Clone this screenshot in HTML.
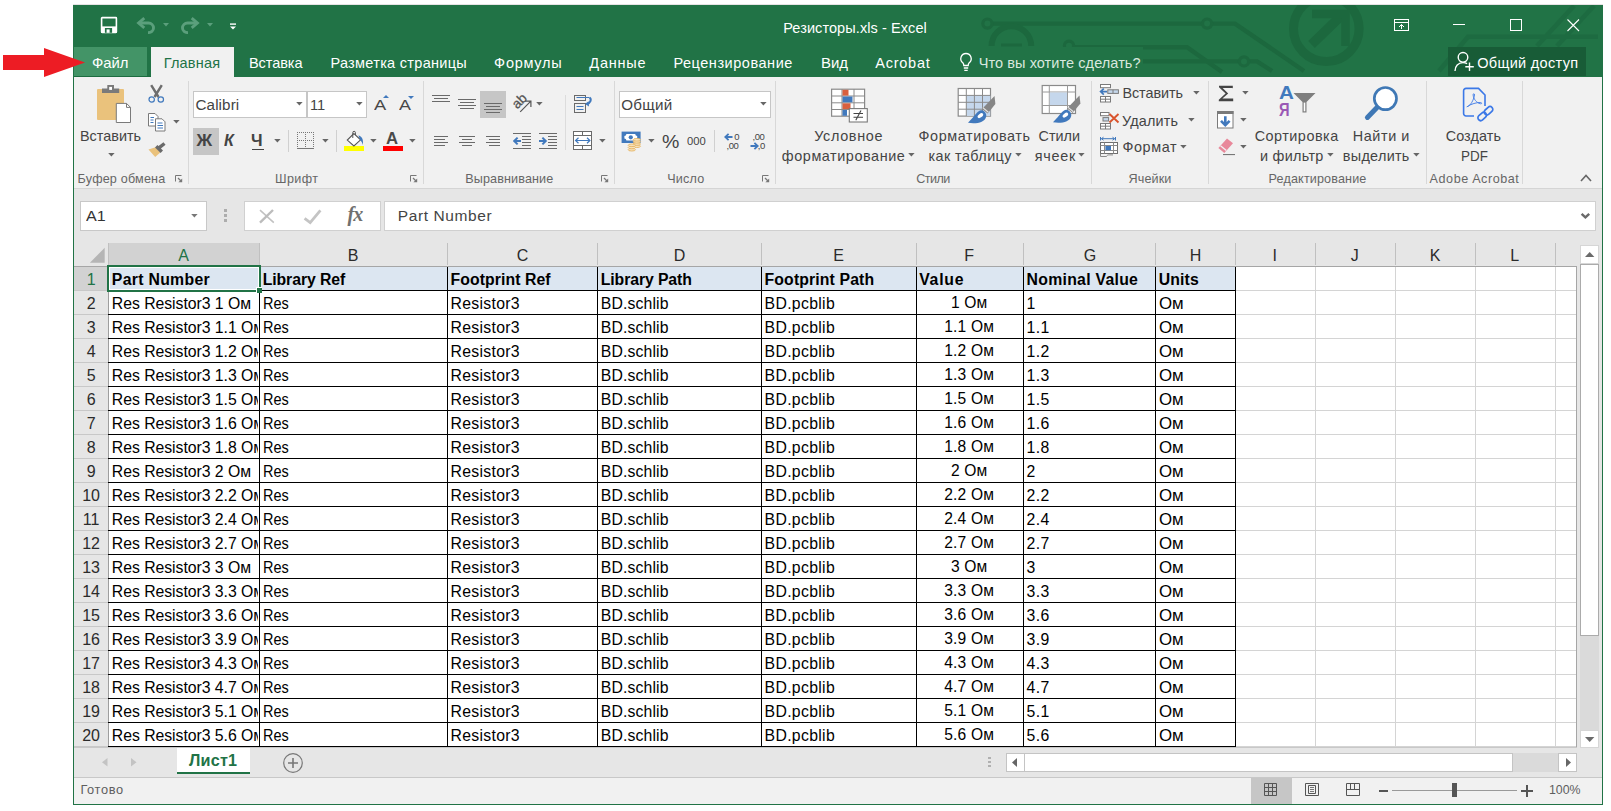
<!DOCTYPE html>
<html><head><meta charset="utf-8"><title>Excel</title>
<style>
html,body{margin:0;padding:0;background:#fff;}
body{width:1611px;height:811px;position:relative;overflow:hidden;font-family:"Liberation Sans",sans-serif;}
#app div,#app svg,#app span{position:absolute;display:block;}
#app span{white-space:nowrap;line-height:1;}
#app{position:absolute;left:0;top:0;width:1611px;height:811px;overflow:hidden;}
</style></head><body><div id="app">
<div style="left:73px;top:5px;width:1530px;height:800px;background:#f1f1f1;"></div>
<div style="left:73px;top:4px;width:1530px;height:1px;background:#e6e3e4;"></div>
<div style="left:73px;top:5px;width:1530px;height:72px;background:#217346;"></div>
<div style="left:74px;top:47px;width:73px;height:29px;background:#439467;"></div>
<div style="left:74px;top:76px;width:77px;height:1px;background:#1c6c40;"></div>
<div style="left:151px;top:47px;width:83px;height:30px;background:#f1f1f1;"></div>
<div style="left:1448px;top:47px;width:138px;height:29px;background:#185c37;"></div>
<div style="left:74px;top:77px;width:1528px;height:111px;background:#f1f1f1;"></div>
<div style="left:74px;top:188px;width:1528px;height:1px;background:#d5d5d5;"></div>
<div style="left:74px;top:189px;width:1528px;height:590px;background:#e6e6e6;"></div>
<div style="left:74px;top:777px;width:1528px;height:1px;background:#c8c8c8;"></div>
<div style="left:74px;top:778px;width:1528px;height:26px;background:#f1f1f1;"></div>
<div style="left:188px;top:81px;width:1px;height:103px;background:#d8d8d8;"></div>
<div style="left:423px;top:81px;width:1px;height:103px;background:#d8d8d8;"></div>
<div style="left:614px;top:81px;width:1px;height:103px;background:#d8d8d8;"></div>
<div style="left:775px;top:81px;width:1px;height:103px;background:#d8d8d8;"></div>
<div style="left:1091px;top:81px;width:1px;height:103px;background:#d8d8d8;"></div>
<div style="left:1208px;top:81px;width:1px;height:103px;background:#d8d8d8;"></div>
<div style="left:1426px;top:81px;width:1px;height:103px;background:#d8d8d8;"></div>
<div style="left:1522px;top:81px;width:1px;height:103px;background:#d8d8d8;"></div>
<div style="left:288px;top:130px;width:1px;height:22px;background:#d0d0d0;"></div>
<div style="left:336px;top:130px;width:1px;height:22px;background:#d0d0d0;"></div>
<div style="left:714px;top:130px;width:1px;height:22px;background:#d0d0d0;"></div>
<div style="left:565px;top:95px;width:1px;height:55px;background:#dcdcdc;"></div>
<div style="left:193px;top:91px;width:112px;height:25px;background:#fff;border:1px solid #c6c6c6;"></div>
<div style="left:307px;top:91px;width:58px;height:25px;background:#fff;border:1px solid #c6c6c6;"></div>
<div style="left:619px;top:91px;width:150px;height:25px;background:#fff;border:1px solid #c6c6c6;"></div>
<div style="left:193px;top:128px;width:26px;height:27px;background:#c6c6c6;"></div>
<div style="left:480px;top:91px;width:26px;height:27px;background:#c6c6c6;"></div>
<div style="left:252px;top:148.5px;width:12px;height:1px;background:#444;"></div>
<svg style="left:107.5px;top:153px" width="7" height="4" viewBox="0 0 7 4"><polygon points="0.2,0 6.6,0 3.4,3.5" fill="#666"/></svg>
<svg style="left:172.5px;top:120px" width="7" height="4" viewBox="0 0 7 4"><polygon points="0.2,0 6.6,0 3.4,3.5" fill="#666"/></svg>
<svg style="left:274px;top:139px" width="7" height="4" viewBox="0 0 7 4"><polygon points="0.2,0 6.6,0 3.4,3.5" fill="#666"/></svg>
<svg style="left:322px;top:139px" width="7" height="4" viewBox="0 0 7 4"><polygon points="0.2,0 6.6,0 3.4,3.5" fill="#666"/></svg>
<svg style="left:370px;top:139px" width="7" height="4" viewBox="0 0 7 4"><polygon points="0.2,0 6.6,0 3.4,3.5" fill="#666"/></svg>
<svg style="left:408.5px;top:139px" width="7" height="4" viewBox="0 0 7 4"><polygon points="0.2,0 6.6,0 3.4,3.5" fill="#666"/></svg>
<svg style="left:296px;top:102px" width="7" height="4" viewBox="0 0 7 4"><polygon points="0.2,0 6.6,0 3.4,3.5" fill="#666"/></svg>
<svg style="left:356px;top:102px" width="7" height="4" viewBox="0 0 7 4"><polygon points="0.2,0 6.6,0 3.4,3.5" fill="#666"/></svg>
<svg style="left:536px;top:102px" width="7" height="4" viewBox="0 0 7 4"><polygon points="0.2,0 6.6,0 3.4,3.5" fill="#666"/></svg>
<svg style="left:599px;top:138.7px" width="7" height="4" viewBox="0 0 7 4"><polygon points="0.2,0 6.6,0 3.4,3.5" fill="#666"/></svg>
<svg style="left:648px;top:138.7px" width="7" height="4" viewBox="0 0 7 4"><polygon points="0.2,0 6.6,0 3.4,3.5" fill="#666"/></svg>
<svg style="left:760px;top:102px" width="7" height="4" viewBox="0 0 7 4"><polygon points="0.2,0 6.6,0 3.4,3.5" fill="#666"/></svg>
<svg style="left:908px;top:153px" width="7" height="4" viewBox="0 0 7 4"><polygon points="0.2,0 6.6,0 3.4,3.5" fill="#666"/></svg>
<svg style="left:1015px;top:153px" width="7" height="4" viewBox="0 0 7 4"><polygon points="0.2,0 6.6,0 3.4,3.5" fill="#666"/></svg>
<svg style="left:1078px;top:153px" width="7" height="4" viewBox="0 0 7 4"><polygon points="0.2,0 6.6,0 3.4,3.5" fill="#666"/></svg>
<svg style="left:1193px;top:91px" width="7" height="4" viewBox="0 0 7 4"><polygon points="0.2,0 6.6,0 3.4,3.5" fill="#666"/></svg>
<svg style="left:1188px;top:118px" width="7" height="4" viewBox="0 0 7 4"><polygon points="0.2,0 6.6,0 3.4,3.5" fill="#666"/></svg>
<svg style="left:1180px;top:145px" width="7" height="4" viewBox="0 0 7 4"><polygon points="0.2,0 6.6,0 3.4,3.5" fill="#666"/></svg>
<svg style="left:1242px;top:91px" width="7" height="4" viewBox="0 0 7 4"><polygon points="0.2,0 6.6,0 3.4,3.5" fill="#666"/></svg>
<svg style="left:1240px;top:118px" width="7" height="4" viewBox="0 0 7 4"><polygon points="0.2,0 6.6,0 3.4,3.5" fill="#666"/></svg>
<svg style="left:1240px;top:145px" width="7" height="4" viewBox="0 0 7 4"><polygon points="0.2,0 6.6,0 3.4,3.5" fill="#666"/></svg>
<svg style="left:1327px;top:153px" width="7" height="4" viewBox="0 0 7 4"><polygon points="0.2,0 6.6,0 3.4,3.5" fill="#666"/></svg>
<svg style="left:1413px;top:153px" width="7" height="4" viewBox="0 0 7 4"><polygon points="0.2,0 6.6,0 3.4,3.5" fill="#666"/></svg>
<svg style="left:175px;top:175px" width="8" height="8" viewBox="0 0 8 8"><path d="M0.5 6.5V0.5H6.5" stroke="#777" fill="none" stroke-width="1"/><polygon points="7.2,3.4 7.2,7.2 3.4,7.2" fill="#777"/><path d="M3 3L6 6" stroke="#777" stroke-width="1.2"/></svg>
<svg style="left:410px;top:175px" width="8" height="8" viewBox="0 0 8 8"><path d="M0.5 6.5V0.5H6.5" stroke="#777" fill="none" stroke-width="1"/><polygon points="7.2,3.4 7.2,7.2 3.4,7.2" fill="#777"/><path d="M3 3L6 6" stroke="#777" stroke-width="1.2"/></svg>
<svg style="left:601px;top:175px" width="8" height="8" viewBox="0 0 8 8"><path d="M0.5 6.5V0.5H6.5" stroke="#777" fill="none" stroke-width="1"/><polygon points="7.2,3.4 7.2,7.2 3.4,7.2" fill="#777"/><path d="M3 3L6 6" stroke="#777" stroke-width="1.2"/></svg>
<svg style="left:762px;top:175px" width="8" height="8" viewBox="0 0 8 8"><path d="M0.5 6.5V0.5H6.5" stroke="#777" fill="none" stroke-width="1"/><polygon points="7.2,3.4 7.2,7.2 3.4,7.2" fill="#777"/><path d="M3 3L6 6" stroke="#777" stroke-width="1.2"/></svg>
<svg style="left:1580px;top:174px" width="12" height="8" viewBox="0 0 12 8"><path d="M1 7L6 1.5L11 7" stroke="#666" stroke-width="1.6" fill="none"/></svg>
<div style="left:80px;top:201px;width:125px;height:28px;background:#fff;border:1px solid #c8c8c8;"></div>
<div style="left:244px;top:201px;width:135px;height:28px;background:#fff;border:1px solid #d0d0d0;"></div>
<div style="left:384px;top:201px;width:1210px;height:28px;background:#fff;border:1px solid #d0d0d0;"></div>
<svg style="left:191px;top:214px" width="7" height="4" viewBox="0 0 7 4"><polygon points="0.2,0 6.6,0 3.4,3.5" fill="#777"/></svg>
<div style="left:224px;top:209.3px;width:3px;height:2.5px;background:#adadad;"></div>
<div style="left:224px;top:214.3px;width:3px;height:2.5px;background:#adadad;"></div>
<div style="left:224px;top:219.2px;width:3px;height:2.5px;background:#adadad;"></div>
<svg style="left:258px;top:208px" width="18" height="17" viewBox="0 0 18 17"><path d="M2 2.2L15.8 14.6" stroke="#c2c2c2" stroke-width="1.6" fill="none"/><path d="M15 2L2 14.6" stroke="#bcbcbc" stroke-width="2.4" fill="none"/></svg>
<svg style="left:303px;top:208px" width="20" height="18" viewBox="0 0 20 18"><path d="M1.6 10.4L7.2 14.6L17.4 2.4" stroke="#c4c4c4" stroke-width="2.8" fill="none"/></svg>
<svg style="left:1580px;top:212px" width="11" height="8" viewBox="0 0 11 8"><path d="M1.6 1.8L5.4 5.4L9.2 1.8" stroke="#6a6a6a" stroke-width="2.4" fill="none"/></svg>
<div style="left:108px;top:266px;width:1469px;height:481px;background:#fff;"></div>
<div style="left:109px;top:243px;width:150px;height:22px;background:#d2d2d2;"></div>
<div style="left:74px;top:267px;width:34px;height:23px;background:#d2d2d2;"></div>
<svg style="left:89px;top:247px" width="16" height="16" viewBox="0 0 16 16"><polygon points="15.7,0.8 15.7,15.7 0.9,15.7" fill="#b5b5b5"/></svg>
<div style="left:1235px;top:266px;width:1px;height:481px;background:#d4d4d4;"></div>
<div style="left:1315px;top:266px;width:1px;height:481px;background:#d4d4d4;"></div>
<div style="left:1395px;top:266px;width:1px;height:481px;background:#d4d4d4;"></div>
<div style="left:1475px;top:266px;width:1px;height:481px;background:#d4d4d4;"></div>
<div style="left:1555px;top:266px;width:1px;height:481px;background:#d4d4d4;"></div>
<div style="left:1236px;top:266px;width:341px;height:1px;background:#d4d4d4;"></div>
<div style="left:1236px;top:290px;width:341px;height:1px;background:#d4d4d4;"></div>
<div style="left:1236px;top:314px;width:341px;height:1px;background:#d4d4d4;"></div>
<div style="left:1236px;top:338px;width:341px;height:1px;background:#d4d4d4;"></div>
<div style="left:1236px;top:362px;width:341px;height:1px;background:#d4d4d4;"></div>
<div style="left:1236px;top:386px;width:341px;height:1px;background:#d4d4d4;"></div>
<div style="left:1236px;top:410px;width:341px;height:1px;background:#d4d4d4;"></div>
<div style="left:1236px;top:434px;width:341px;height:1px;background:#d4d4d4;"></div>
<div style="left:1236px;top:458px;width:341px;height:1px;background:#d4d4d4;"></div>
<div style="left:1236px;top:482px;width:341px;height:1px;background:#d4d4d4;"></div>
<div style="left:1236px;top:506px;width:341px;height:1px;background:#d4d4d4;"></div>
<div style="left:1236px;top:530px;width:341px;height:1px;background:#d4d4d4;"></div>
<div style="left:1236px;top:554px;width:341px;height:1px;background:#d4d4d4;"></div>
<div style="left:1236px;top:578px;width:341px;height:1px;background:#d4d4d4;"></div>
<div style="left:1236px;top:602px;width:341px;height:1px;background:#d4d4d4;"></div>
<div style="left:1236px;top:626px;width:341px;height:1px;background:#d4d4d4;"></div>
<div style="left:1236px;top:650px;width:341px;height:1px;background:#d4d4d4;"></div>
<div style="left:1236px;top:674px;width:341px;height:1px;background:#d4d4d4;"></div>
<div style="left:1236px;top:698px;width:341px;height:1px;background:#d4d4d4;"></div>
<div style="left:1236px;top:722px;width:341px;height:1px;background:#d4d4d4;"></div>
<div style="left:1236px;top:746px;width:341px;height:1px;background:#d4d4d4;"></div>
<div style="left:1576px;top:266px;width:1px;height:481px;background:#a6a6a6;"></div>
<div style="left:108px;top:243px;width:1px;height:22px;background:#c0c0c0;"></div>
<div style="left:259px;top:243px;width:1px;height:22px;background:#c0c0c0;"></div>
<div style="left:447px;top:243px;width:1px;height:22px;background:#c0c0c0;"></div>
<div style="left:597px;top:243px;width:1px;height:22px;background:#c0c0c0;"></div>
<div style="left:761px;top:243px;width:1px;height:22px;background:#c0c0c0;"></div>
<div style="left:916px;top:243px;width:1px;height:22px;background:#c0c0c0;"></div>
<div style="left:1023px;top:243px;width:1px;height:22px;background:#c0c0c0;"></div>
<div style="left:1155px;top:243px;width:1px;height:22px;background:#c0c0c0;"></div>
<div style="left:1235px;top:243px;width:1px;height:22px;background:#c0c0c0;"></div>
<div style="left:1315px;top:243px;width:1px;height:22px;background:#c0c0c0;"></div>
<div style="left:1395px;top:243px;width:1px;height:22px;background:#c0c0c0;"></div>
<div style="left:1475px;top:243px;width:1px;height:22px;background:#c0c0c0;"></div>
<div style="left:1555px;top:243px;width:1px;height:22px;background:#c0c0c0;"></div>
<div style="left:74px;top:290px;width:34px;height:1px;background:#c8c8c8;"></div>
<div style="left:74px;top:314px;width:34px;height:1px;background:#c8c8c8;"></div>
<div style="left:74px;top:338px;width:34px;height:1px;background:#c8c8c8;"></div>
<div style="left:74px;top:362px;width:34px;height:1px;background:#c8c8c8;"></div>
<div style="left:74px;top:386px;width:34px;height:1px;background:#c8c8c8;"></div>
<div style="left:74px;top:410px;width:34px;height:1px;background:#c8c8c8;"></div>
<div style="left:74px;top:434px;width:34px;height:1px;background:#c8c8c8;"></div>
<div style="left:74px;top:458px;width:34px;height:1px;background:#c8c8c8;"></div>
<div style="left:74px;top:482px;width:34px;height:1px;background:#c8c8c8;"></div>
<div style="left:74px;top:506px;width:34px;height:1px;background:#c8c8c8;"></div>
<div style="left:74px;top:530px;width:34px;height:1px;background:#c8c8c8;"></div>
<div style="left:74px;top:554px;width:34px;height:1px;background:#c8c8c8;"></div>
<div style="left:74px;top:578px;width:34px;height:1px;background:#c8c8c8;"></div>
<div style="left:74px;top:602px;width:34px;height:1px;background:#c8c8c8;"></div>
<div style="left:74px;top:626px;width:34px;height:1px;background:#c8c8c8;"></div>
<div style="left:74px;top:650px;width:34px;height:1px;background:#c8c8c8;"></div>
<div style="left:74px;top:674px;width:34px;height:1px;background:#c8c8c8;"></div>
<div style="left:74px;top:698px;width:34px;height:1px;background:#c8c8c8;"></div>
<div style="left:74px;top:722px;width:34px;height:1px;background:#c8c8c8;"></div>
<div style="left:74px;top:746px;width:34px;height:1px;background:#c8c8c8;"></div>
<div style="left:108px;top:266px;width:1px;height:481px;background:#ababab;"></div>
<div style="left:109px;top:267px;width:1126px;height:23px;background:#dce6f1;"></div>
<div style="left:259px;top:266px;width:1px;height:481px;background:#000;"></div>
<div style="left:447px;top:266px;width:1px;height:481px;background:#000;"></div>
<div style="left:597px;top:266px;width:1px;height:481px;background:#000;"></div>
<div style="left:761px;top:266px;width:1px;height:481px;background:#000;"></div>
<div style="left:916px;top:266px;width:1px;height:481px;background:#000;"></div>
<div style="left:1023px;top:266px;width:1px;height:481px;background:#000;"></div>
<div style="left:1155px;top:266px;width:1px;height:481px;background:#000;"></div>
<div style="left:1235px;top:266px;width:1px;height:481px;background:#000;"></div>
<div style="left:108px;top:266px;width:1px;height:481px;background:#9e9e9e;"></div>
<div style="left:108px;top:290px;width:1128px;height:1px;background:#000;"></div>
<div style="left:108px;top:314px;width:1128px;height:1px;background:#000;"></div>
<div style="left:108px;top:338px;width:1128px;height:1px;background:#000;"></div>
<div style="left:108px;top:362px;width:1128px;height:1px;background:#000;"></div>
<div style="left:108px;top:386px;width:1128px;height:1px;background:#000;"></div>
<div style="left:108px;top:410px;width:1128px;height:1px;background:#000;"></div>
<div style="left:108px;top:434px;width:1128px;height:1px;background:#000;"></div>
<div style="left:108px;top:458px;width:1128px;height:1px;background:#000;"></div>
<div style="left:108px;top:482px;width:1128px;height:1px;background:#000;"></div>
<div style="left:108px;top:506px;width:1128px;height:1px;background:#000;"></div>
<div style="left:108px;top:530px;width:1128px;height:1px;background:#000;"></div>
<div style="left:108px;top:554px;width:1128px;height:1px;background:#000;"></div>
<div style="left:108px;top:578px;width:1128px;height:1px;background:#000;"></div>
<div style="left:108px;top:602px;width:1128px;height:1px;background:#000;"></div>
<div style="left:108px;top:626px;width:1128px;height:1px;background:#000;"></div>
<div style="left:108px;top:650px;width:1128px;height:1px;background:#000;"></div>
<div style="left:108px;top:674px;width:1128px;height:1px;background:#000;"></div>
<div style="left:108px;top:698px;width:1128px;height:1px;background:#000;"></div>
<div style="left:108px;top:722px;width:1128px;height:1px;background:#000;"></div>
<div style="left:108px;top:746px;width:1128px;height:1px;background:#000;"></div>
<div style="left:74px;top:266px;width:1503px;height:1px;background:#a6a6a6;"></div>
<div style="left:107px;top:265px;width:150px;height:23px;background:transparent;border:2px solid #217346;box-shadow:inset 0 0 0 1px #fff;"></div>
<div style="left:256px;top:287px;width:6px;height:6px;background:#fff;"></div>
<div style="left:257px;top:288px;width:5px;height:5px;background:#217346;"></div>
<div style="left:1580px;top:245px;width:19px;height:503px;background:#dadada;"></div>
<div style="left:1580px;top:245px;width:17px;height:17px;background:#fff;border:1px solid #d6d6d6;"></div>
<div style="left:1580px;top:264px;width:17px;height:370px;background:#fff;border:1px solid #ababab;"></div>
<div style="left:1580px;top:730px;width:17px;height:16px;background:#fff;border:1px solid #d6d6d6;"></div>
<svg style="left:1585px;top:252px" width="10" height="5" viewBox="0 0 10 5"><polygon points="0,5 9.4,5 4.7,0" fill="#6a6a6a"/></svg>
<svg style="left:1585px;top:737px" width="10" height="5" viewBox="0 0 10 5"><polygon points="0,0 9.4,0 4.7,5" fill="#6a6a6a"/></svg>
<div style="left:74px;top:747px;width:1503px;height:1px;background:#c8c8c8;"></div>
<div style="left:177px;top:748px;width:73px;height:24px;background:#fff;"></div>
<div style="left:177px;top:772px;width:73px;height:2px;background:#217346;"></div>
<svg style="left:101.5px;top:758px" width="6" height="9" viewBox="0 0 6 9"><polygon points="5.5,0 5.5,8.6 0,4.3" fill="#c3c3c3"/></svg>
<svg style="left:130.7px;top:758px" width="6" height="9" viewBox="0 0 6 9"><polygon points="0,0 0,8.6 5.5,4.3" fill="#c3c3c3"/></svg>
<svg style="left:282px;top:752px" width="22" height="22" viewBox="0 0 22 22"><circle cx="11" cy="11" r="9.3" fill="none" stroke="#777" stroke-width="1.2"/><path d="M11 6V16M6 11H16" stroke="#777" stroke-width="1.6"/></svg>
<div style="left:988px;top:757px;width:3px;height:2px;background:#b0b0b0;"></div>
<div style="left:988px;top:761px;width:3px;height:2px;background:#b0b0b0;"></div>
<div style="left:988px;top:765px;width:3px;height:2px;background:#b0b0b0;"></div>
<div style="left:1006px;top:753px;width:571px;height:19px;background:#dadada;"></div>
<div style="left:1006px;top:753px;width:17px;height:17px;background:#fff;border:1px solid #c4c4c4;"></div>
<div style="left:1024px;top:753px;width:487px;height:17px;background:#fff;border:1px solid #c4c4c4;"></div>
<div style="left:1558px;top:753px;width:17px;height:17px;background:#fff;border:1px solid #c4c4c4;"></div>
<svg style="left:1012px;top:758px" width="5" height="9" viewBox="0 0 5 9"><polygon points="5,0 5,9 0,4.5" fill="#666"/></svg>
<svg style="left:1566px;top:758px" width="5" height="9" viewBox="0 0 5 9"><polygon points="0,0 0,9 5,4.5" fill="#666"/></svg>
<div style="left:1251px;top:778px;width:41px;height:26px;background:#c6c6c6;"></div>
<svg style="left:1264px;top:783px" width="14" height="14" viewBox="0 0 14 14"><path d="M0.5 0.5H12.5V12.5H0.5ZM0.5 4.5H12.5M0.5 8.5H12.5M4.5 0.5V12.5M8.5 0.5V12.5" stroke="#555" fill="none"/></svg>
<svg style="left:1305px;top:783px" width="15" height="14" viewBox="0 0 15 14"><path d="M0.5 0.5H13.5V12.5H0.5ZM3.5 2.5H10.5V10.5H3.5Z" stroke="#555" fill="none"/><path d="M5 4.5H9M5 6.5H9M5 8.5H9" stroke="#777" fill="none"/></svg>
<svg style="left:1346px;top:783px" width="15" height="14" viewBox="0 0 15 14"><path d="M0.5 0.5H13.5V12.5H0.5ZM4.5 0.5V6.5M8.5 0.5V6.5M0.5 6.5H13.5" stroke="#555" fill="none"/></svg>
<div style="left:1379px;top:789.5px;width:9px;height:2px;background:#555;"></div>
<div style="left:1392px;top:790px;width:125px;height:1px;background:#999;"></div>
<div style="left:1452px;top:783px;width:5px;height:14px;background:#555;"></div>
<div style="left:1521px;top:789.5px;width:12px;height:2px;background:#555;"></div>
<div style="left:1526px;top:784.5px;width:2px;height:12px;background:#555;"></div>
<div style="left:73px;top:5px;width:1px;height:800px;background:#217346;"></div>
<div style="left:1602px;top:5px;width:1px;height:800px;background:#217346;"></div>
<div style="left:73px;top:804px;width:1530px;height:1px;background:#217346;"></div>
<svg style="left:960px;top:5px" width="642" height="72" viewBox="0 0 642 72"><g fill="none" stroke="#1c683e" stroke-width="4.4"><path d="M32 18.6H242M252 18.6H275L344 66"/><path d="M114 42.2H227L262 67"/><path d="M182 56.4H279M289 56.4H297L312 66"/><circle cx="27.4" cy="18.6" r="4.6" stroke-width="3.2"/><circle cx="247.1" cy="18.6" r="4.6" stroke-width="3.2"/><circle cx="109" cy="40.7" r="4.6" stroke-width="3.2"/><circle cx="284" cy="56.4" r="4.6" stroke-width="3.2"/><path d="M31.6 41a19.8 19.8 0 0 1 39.6 0" stroke-width="6"/><path d="M41 40H62" stroke-width="3"/><circle cx="366.3" cy="23.8" r="32.8" stroke-width="9"/><path d="M351.5 39.5L381 11" stroke-width="9.5"/><path d="M352 9H385.5V41" stroke-width="8.5"/></g><g fill="none" stroke="#1c683e" stroke-width="4.6" opacity="0.7"><path d="M638 31.8H508L479 66M614 0.7L577 41M634 0.7L597 41"/></g></svg>
<div style="left:1448px;top:47px;width:138px;height:29px;background:#185c37;"></div>
<div style="left:955px;top:47px;width:188px;height:29px;background:#217346;"></div>
<svg style="left:100px;top:16px" width="18" height="18" viewBox="0 0 18 18"><rect x="1.6" y="1.6" width="14.8" height="14.8" rx="0.6" fill="none" stroke="#fff" stroke-width="1.6"/><rect x="1" y="10.4" width="16" height="6.4" fill="#fff"/><rect x="4.9" y="12" width="7.2" height="4.8" fill="#217346"/><rect x="6.6" y="13.4" width="3" height="3.4" fill="#fff"/></svg>
<svg style="left:136px;top:17px" width="20" height="17" viewBox="0 0 20 17"><path d="M8.3 1.2L2.6 6L8.3 10.8" fill="none" stroke="#5b9f7c" stroke-width="2.9"/><path d="M3 6H12.5a5 5 0 0 1 5 5c0 2.8-2.4 4.6-5.5 4.6" fill="none" stroke="#5b9f7c" stroke-width="2.9"/></svg>
<svg style="left:180px;top:17px" width="20" height="17" viewBox="0 0 20 17"><g transform="translate(20,0) scale(-1,1)"><path d="M8.3 1.2L2.6 6L8.3 10.8" fill="none" stroke="#5b9f7c" stroke-width="2.9"/><path d="M3 6H12.5a5 5 0 0 1 5 5c0 2.8-2.4 4.6-5.5 4.6" fill="none" stroke="#5b9f7c" stroke-width="2.9"/></g></svg>
<svg style="left:163px;top:23px" width="6" height="4" viewBox="0 0 6 4"><polygon points="0,0 6,0 3,3.5" fill="#5b9f7c"/></svg>
<svg style="left:207px;top:23px" width="6" height="4" viewBox="0 0 6 4"><polygon points="0,0 6,0 3,3.5" fill="#5b9f7c"/></svg>
<svg style="left:229.5px;top:22.5px" width="6" height="7" viewBox="0 0 6 7"><rect x="0" y="0.4" width="6" height="1.4" fill="#fff"/><polygon points="0,3.4 6,3.4 3,6.6" fill="#fff"/></svg>
<svg style="left:1394px;top:19px" width="16" height="13" viewBox="0 0 16 13"><rect x="0.5" y="0.5" width="14" height="11" fill="none" stroke="#fff"/><path d="M0.5 3.5H14.5M7.5 10V5.5M5 8L7.5 5.5L10 8" fill="none" stroke="#fff"/></svg>
<div style="left:1453px;top:24px;width:12px;height:1px;background:#fff;"></div>
<svg style="left:1510px;top:19px" width="13" height="13" viewBox="0 0 13 13"><rect x="0.5" y="0.5" width="11" height="11" fill="none" stroke="#fff"/></svg>
<svg style="left:1567px;top:19px" width="13" height="13" viewBox="0 0 13 13"><path d="M0.5 0.5L12 12M12 0.5L0.5 12" stroke="#fff" stroke-width="1.1"/></svg>
<svg style="left:959px;top:52px" width="14" height="21" viewBox="0 0 14 21"><path d="M7 1.5a5.2 5.2 0 0 1 3.2 9.3c-.7.7-1 1.6-1 2.7H4.8c0-1.1-.3-2-1-2.7A5.2 5.2 0 0 1 7 1.5Z" fill="none" stroke="#fff" stroke-width="1.3"/><path d="M4.8 16H9.2M5.3 18.3H8.7" stroke="#fff" stroke-width="1.3"/></svg>
<svg style="left:1454px;top:51px" width="22" height="22" viewBox="0 0 22 22"><circle cx="9" cy="6.3" r="4.8" fill="none" stroke="#fff" stroke-width="1.4"/><path d="M1 20c0-5 3.2-8.4 8-8.4 1.6 0 3 .4 4.1 1" fill="none" stroke="#fff" stroke-width="1.4"/><path d="M15.5 11.5V20M11.3 15.8H19.8" stroke="#fff" stroke-width="1.4"/></svg>
<svg style="left:96px;top:84px" width="36" height="40" viewBox="0 0 36 40"><rect x="1" y="5" width="27" height="31" rx="1" fill="#eac27c"/><path d="M6 4.4H11.3V1H18V4.4H23.2V9H6Z" fill="#7a7a7a"/><rect x="13.2" y="2.9" width="2.8" height="3" fill="#fff"/><path d="M20.3 19.4H30.5L34.5 23.4V38.5H20.3Z" fill="#fff" stroke="#7a7a7a" stroke-width="1"/><path d="M30.5 19.4V23.4H34.5" fill="none" stroke="#7a7a7a"/></svg>
<svg style="left:147px;top:84px" width="19" height="20" viewBox="0 0 19 20"><path d="M4.2 1.2L11.5 13M14.8 1.2L7.5 13" stroke="#6d6d6d" stroke-width="2.4" fill="none"/><circle cx="4.7" cy="15.5" r="2.7" fill="none" stroke="#4179bd" stroke-width="1.2"/><circle cx="13.8" cy="15.5" r="2.7" fill="none" stroke="#4179bd" stroke-width="1.2"/></svg>
<svg style="left:147px;top:112px" width="19" height="20" viewBox="0 0 19 20"><path d="M1.5 1.5H8L11 4.5V14H1.5Z" fill="#fff" stroke="#7a7a7a"/><path d="M3.5 5.5H7M3.5 8H6.5M3.5 10.5H6.5" stroke="#4179bd"/><path d="M8.5 6.8H15L18 9.8V19H8.5Z" fill="#fff" stroke="#7a7a7a"/><path d="M10.5 11H15.5M10.5 13.5H16M10.5 16H16" stroke="#4179bd"/></svg>
<svg style="left:147px;top:141px" width="20" height="17" viewBox="0 0 20 17"><polygon points="1.5,8.5 8.5,6.2 13.3,11.5 8.2,16" fill="#eac27c"/><path d="M9.2 5.3L14.8 10.8M11.6 7.2L17.5 2.5" stroke="#6a6a6a" stroke-width="3.4"/></svg>
<svg style="left:383px;top:95px" width="6" height="3" viewBox="0 0 6 3"><polygon points="0,3 6,3 3,0" fill="#4179bd"/></svg>
<svg style="left:408px;top:96px" width="6" height="3" viewBox="0 0 6 3"><polygon points="0,0 6,0 3,3" fill="#4179bd"/></svg>
<svg style="left:296px;top:131px" width="19" height="19" viewBox="0 0 19 19"><g shape-rendering="crispEdges"><path d="M1 1.5H18M1 9.5H18M1.5 1V16M9.5 1V16M17.5 1V16" stroke="#777" stroke-width="1" stroke-dasharray="1 1" fill="none"/><rect x="1" y="17" width="17" height="1" fill="#777"/></g></svg>
<svg style="left:344px;top:130px" width="21" height="22" viewBox="0 0 21 22"><rect x="0" y="16" width="20" height="5" fill="#ffff00"/><path d="M9.9 3.6L16.6 9.8L9.9 16L3.3 10.1Z" fill="#fff" stroke="#555" stroke-width="1.1"/><path d="M8.8 8V2.6a1.3 1.3 0 0 1 2.6 0V5" fill="none" stroke="#555" stroke-width="1"/><path d="M14.4 5.6c3.3 .6 5.3 3.4 4.4 9.4-.7-2.6-1.4-3.6-2.4-4.4Z" fill="#4179bd"/></svg>
<div style="left:383px;top:146px;width:20px;height:5px;background:#ff0000;"></div>
<div style="left:432px;top:95px;width:18px;height:1px;background:#6a6a6a;"></div>
<div style="left:434px;top:98px;width:14px;height:1px;background:#6a6a6a;"></div>
<div style="left:432px;top:101px;width:18px;height:1px;background:#6a6a6a;"></div>
<div style="left:458px;top:99px;width:18px;height:1px;background:#6a6a6a;"></div>
<div style="left:460px;top:102px;width:14px;height:1px;background:#6a6a6a;"></div>
<div style="left:458px;top:105px;width:18px;height:1px;background:#6a6a6a;"></div>
<div style="left:460px;top:108px;width:14px;height:1px;background:#6a6a6a;"></div>
<div style="left:484px;top:103px;width:18px;height:1px;background:#6a6a6a;"></div>
<div style="left:486px;top:106px;width:14px;height:1px;background:#6a6a6a;"></div>
<div style="left:484px;top:109px;width:18px;height:1px;background:#6a6a6a;"></div>
<div style="left:486px;top:112px;width:14px;height:1px;background:#6a6a6a;"></div>
<div style="left:434px;top:136px;width:14px;height:1px;background:#6a6a6a;"></div>
<div style="left:434px;top:139px;width:11px;height:1px;background:#6a6a6a;"></div>
<div style="left:434px;top:142px;width:14px;height:1px;background:#6a6a6a;"></div>
<div style="left:434px;top:145px;width:11px;height:1px;background:#6a6a6a;"></div>
<div style="left:459px;top:136px;width:16px;height:1px;background:#6a6a6a;"></div>
<div style="left:462px;top:139px;width:10px;height:1px;background:#6a6a6a;"></div>
<div style="left:459px;top:142px;width:16px;height:1px;background:#6a6a6a;"></div>
<div style="left:462px;top:145px;width:10px;height:1px;background:#6a6a6a;"></div>
<div style="left:486px;top:136px;width:14px;height:1px;background:#6a6a6a;"></div>
<div style="left:489px;top:139px;width:11px;height:1px;background:#6a6a6a;"></div>
<div style="left:486px;top:142px;width:14px;height:1px;background:#6a6a6a;"></div>
<div style="left:489px;top:145px;width:11px;height:1px;background:#6a6a6a;"></div>
<svg style="left:511px;top:93px" width="22" height="21" viewBox="0 0 22 21"><g transform="translate(6.2,16.6) rotate(-45)"><text x="0" y="0" font-family="Liberation Sans" font-size="13.6" fill="#555" stroke="#555" stroke-width="0.25">ab</text></g><path d="M9.2 18.8L19.6 8.4M14 8.2H19.9V14" fill="none" stroke="#555" stroke-width="1.2"/></svg>
<svg style="left:573px;top:94px" width="21" height="20" viewBox="0 0 21 20"><rect x="1.5" y="1.5" width="11" height="5" fill="none" stroke="#6a6a6a"/><rect x="1.5" y="9.5" width="11" height="9" fill="none" stroke="#6a6a6a"/><path d="M3.5 3.5H16.5M3.5 12.5H10.5M3.5 15.5H10.5" fill="none" stroke="#4179bd" stroke-width="1"/><path d="M16.6 3.6c2.2 1.6 1 5.8-2.8 6.4" fill="none" stroke="#4179bd" stroke-width="2"/><path d="M15.6 7.2L12 10L16 12.4Z" fill="#4179bd"/></svg>
<svg style="left:513px;top:133px" width="18" height="16" viewBox="0 0 18 16"><path d="M0 0.5H18M0 15.5H18M9 3.5H18M9 6.5H18M9 9.5H18M9 12.5H18" stroke="#6a6a6a"/><path d="M8 8H1.5M4.6 4.6L1.2 8L4.6 11.4" fill="none" stroke="#4179bd" stroke-width="2"/></svg>
<svg style="left:539px;top:133px" width="18" height="16" viewBox="0 0 18 16"><path d="M0 0.5H18M0 15.5H18M9 3.5H18M9 6.5H18M9 9.5H18M9 12.5H18" stroke="#6a6a6a"/><path d="M0 8H6.5M3.4 4.6L6.8 8L3.4 11.4" fill="none" stroke="#4179bd" stroke-width="2"/></svg>
<svg style="left:573px;top:131px" width="20" height="20" viewBox="0 0 20 20"><rect x="0.5" y="0.5" width="18" height="18" fill="#fff" stroke="#6a6a6a" stroke-width="1"/><path d="M0.5 4.5H18.5M0.5 14.5H18.5M9.5 0.5V4.5M9.5 14.5V18.5" stroke="#6a6a6a" stroke-width="1"/><path d="M3 9.5H16.5M5.5 6.8L2.6 9.5L5.5 12.2M14 6.8L16.9 9.5L14 12.2" fill="none" stroke="#4179bd" stroke-width="1.2"/></svg>
<svg style="left:621px;top:131px" width="21" height="21" viewBox="0 0 21 21"><rect x="0.6" y="0.6" width="19" height="11.4" fill="#4179bd"/><path d="M5.4 3H14.2a2.2 2.2 0 0 0 2 2V7.6a2.2 2.2 0 0 0 -2 2H5.4a2.2 2.2 0 0 0 -2 -2V5a2.2 2.2 0 0 0 2 -2Z" fill="#fff"/><circle cx="9.8" cy="6.3" r="2.1" fill="#4179bd"/><g fill="#f7e3bd" stroke="#e5b566" stroke-width="0.9"><ellipse cx="15.8" cy="15.2" rx="3.7" ry="1.3"/><ellipse cx="15.8" cy="13" rx="3.7" ry="1.3"/><ellipse cx="15.8" cy="10.8" rx="3.7" ry="1.3"/><ellipse cx="15.8" cy="8.8" rx="3.7" ry="1.3"/><ellipse cx="10.8" cy="18.7" rx="3.7" ry="1.3"/><ellipse cx="10.8" cy="16.5" rx="3.7" ry="1.3"/><ellipse cx="10.8" cy="14.3" rx="3.7" ry="1.3"/></g></svg>
<svg style="left:724px;top:133px" width="9" height="8" viewBox="0 0 9 8"><path d="M8.5 4H1.5M4.6 0.8L1.2 4L4.6 7.2" fill="none" stroke="#4179bd" stroke-width="1.8"/></svg>
<svg style="left:749.5px;top:142px" width="9" height="8" viewBox="0 0 9 8"><path d="M0.5 4H7.5M4.4 0.8L7.8 4L4.4 7.2" fill="none" stroke="#4179bd" stroke-width="1.8"/></svg>
<svg style="left:831px;top:88px" width="38" height="36" viewBox="0 0 38 36"><rect x="0.6" y="1.2" width="33" height="27" fill="#fff" stroke="#8a8a8a" stroke-width="1.2"/><path d="M0.6 8H33.6M0.6 14.8H33.6M0.6 21.5H33.6M11 1.2V28.2M23 1.2V28.2" stroke="#8a8a8a" stroke-width="1"/><rect x="11.5" y="1.8" width="6" height="5.8" fill="#d9603f"/><rect x="11.5" y="8.5" width="10" height="5.8" fill="#4179bd"/><rect x="11.5" y="15.3" width="8" height="5.8" fill="#d9603f"/><rect x="11.5" y="22" width="4.5" height="5.8" fill="#4179bd"/><rect x="18.3" y="20.6" width="18" height="13.4" fill="#fff" stroke="#7a7a7a" stroke-width="1.1"/><path d="M22.5 25.5H32M22.5 29.3H32M30 22.5L24.8 32.3" stroke="#444" stroke-width="1.1"/></svg>
<svg style="left:957px;top:87px" width="40" height="38" viewBox="0 0 40 38"><rect x="1.2" y="1.5" width="32.3" height="27.6" fill="#fff" stroke="#8a8a8a" stroke-width="1.2"/><rect x="9.3" y="8.4" width="24" height="20.5" fill="#c5d7ec"/><path d="M1.2 8.4H33.5M1.2 15.3H33.5M1.2 22.2H33.5M9.3 1.5V29M17.4 1.5V29M25.5 1.5V29" stroke="#8a8a8a" stroke-width="1"/><g transform="translate(0,0)"><polygon points="37.5,9 38.4,17 30.6,26.6 25,22" fill="#868686"/><path d="M25.8 20.6L31.4 25.2" stroke="#e4e4e4" stroke-width="1.2"/><path d="M24.6 23.2C20.6 23 18.6 28 11 35.8C19.4 36.8 27.8 35.8 29.2 29.4C29.8 26.8 27.6 23.6 24.6 23.2Z" fill="#4179bd"/><ellipse cx="23.4" cy="28.6" rx="3.2" ry="1.8" transform="rotate(-38 23.4 28.6)" fill="#fff"/></g></svg>
<svg style="left:1041px;top:84px" width="42" height="40" viewBox="0 0 42 40"><rect x="1.2" y="1.5" width="33.3" height="28" fill="#fff" stroke="#8a8a8a" stroke-width="1.2"/><path d="M1.2 8H34.5M1.2 21.5H34.5M8.3 1.5V29.5M26.5 1.5V29.5" stroke="#9a9a9a" stroke-width="1"/><rect x="8.8" y="8.5" width="17.2" height="12.5" fill="#c5d7ec"/><g transform="translate(1,2.5)"><polygon points="37.5,9 38.4,17 30.6,26.6 25,22" fill="#868686"/><path d="M25.8 20.6L31.4 25.2" stroke="#e4e4e4" stroke-width="1.2"/><path d="M24.6 23.2C20.6 23 18.6 28 11 35.8C19.4 36.8 27.8 35.8 29.2 29.4C29.8 26.8 27.6 23.6 24.6 23.2Z" fill="#4179bd"/><ellipse cx="23.4" cy="28.6" rx="3.2" ry="1.8" transform="rotate(-38 23.4 28.6)" fill="#fff"/></g></svg>
<svg style="left:1099px;top:83px" width="21" height="21" viewBox="0 0 21 21"><g fill="#fff" stroke="#7a7a7a" stroke-width="1"><rect x="1.5" y="1.5" width="10" height="3.2"/><rect x="1.5" y="13.5" width="10" height="5.5"/></g><path d="M6.5 13.5V19M1.5 16.2H11.5" stroke="#7a7a7a"/><rect x="8.8" y="6.8" width="10.6" height="3.6" fill="#c5d7ec" stroke="#7a7a7a"/><path d="M14 6.8V10.4" stroke="#7a7a7a"/><path d="M8 8.6H2M4.8 5.6L1.6 8.6L4.8 11.6" fill="none" stroke="#4179bd" stroke-width="1.7"/></svg>
<svg style="left:1099px;top:111px" width="22" height="20" viewBox="0 0 22 20"><g fill="#fff" stroke="#7a7a7a" stroke-width="1"><rect x="1.5" y="1.5" width="8.5" height="3.2"/><rect x="1.5" y="12.5" width="10" height="5.5"/></g><path d="M6.5 12.5V18M1.5 15.2H11.5" stroke="#7a7a7a"/><rect x="4" y="6.6" width="5.6" height="3.4" fill="#c5d7ec" stroke="#7a7a7a"/><path d="M10.5 3L19.5 11.5M19.5 3L10.5 11.5" fill="none" stroke="#d9532c" stroke-width="1.9"/></svg>
<svg style="left:1099px;top:136px" width="21" height="22" viewBox="0 0 21 22"><path d="M1.5 1V4.5M16.5 1V4.5M2.5 2.7H15.5M4.5 1.2L2.4 2.7L4.5 4.2M13.5 1.2L15.6 2.7L13.5 4.2" fill="none" stroke="#4179bd" stroke-width="1"/><rect x="1.5" y="6.5" width="17" height="11" fill="#fff" stroke="#6f6f6f"/><path d="M1.5 9.5H18.5M1.5 14.5H18.5M5.5 6.5V17.5M14.5 6.5V17.5" stroke="#8a8a8a" stroke-width="1"/><rect x="6.4" y="10" width="5.6" height="4.2" fill="#4179bd"/><path d="M1.5 17.5V20.5H7.5c.4-1.2 1.2-1.6 2.6-1.6H14" fill="none" stroke="#8a8a8a"/></svg>
<svg style="left:1217.5px;top:85px" width="16" height="17" viewBox="0 0 16 17"><path d="M14.8 3.2V0.8H1V2.2L7.6 8.4L0.8 14.8V16.2H15.2V13.4H4.4L10.2 8.4L4.6 2.9H14Z" fill="#444"/></svg>
<svg style="left:1216px;top:110px" width="19" height="20" viewBox="0 0 19 20"><rect x="1.5" y="1.5" width="15.5" height="16.5" fill="#fff" stroke="#7a7a7a"/><rect x="1" y="1" width="16.5" height="3" fill="#7a7a7a"/><path d="M9.3 6.2V14.6M5 10.8L9.3 15.2L13.6 10.8" fill="none" stroke="#4179bd" stroke-width="2.6"/></svg>
<svg style="left:1216px;top:137px" width="22" height="19" viewBox="0 0 22 19"><path d="M11 1.5L17 6.2L8.3 16L2.4 11Z" fill="#e8889a"/><path d="M4.5 8.8L10.3 13.6" stroke="#f1f1f1" stroke-width="1.3"/><path d="M7 17.6H19" stroke="#6a6a6a" stroke-width="1"/></svg>
<svg style="left:1293px;top:92px" width="23" height="22" viewBox="0 0 23 22"><path d="M0.5 1H22.5L13.5 10V20.5H9.5V10Z" fill="#7e7e7e"/><path d="M10.7 10.6H12.3V19.3H10.7Z" fill="#fff"/></svg>
<svg style="left:1362px;top:84px" width="38" height="38" viewBox="0 0 38 38"><circle cx="23.4" cy="14.6" r="11.1" fill="#fff" stroke="#3f78b5" stroke-width="2.7"/><path d="M15 23.6L5.4 33.4" stroke="#3f78b5" stroke-width="5" stroke-linecap="round"/></svg>
<svg style="left:1461px;top:86px" width="35" height="39" viewBox="0 0 35 39"><path d="M5 2.4H17.5L24 9V20M13 30H5a2.4 2.4 0 0 1-2.4-2.4V4.8A2.4 2.4 0 0 1 5 2.4" fill="none" stroke="#3b78e7" stroke-width="1.6"/><path d="M6.5 20.5c3-1 6-6 7-11.5.2-1.6-1.4-1.8-1.4-.2.2 4 3.5 8.2 7.5 9 1.4.2 1.4-1.2 0-1.3-4-.2-9.5 1.6-12.5 3.6-1.3 1-1.8.8-.6.4Z" fill="none" stroke="#3b78e7" stroke-width="0.9"/><g fill="none" stroke="#3b78e7" stroke-width="1.7"><rect x="-4.6" y="-2.7" width="9.6" height="5.6" rx="2.8" transform="translate(21,30.5) rotate(-42)"/><rect x="-4.6" y="-2.7" width="9.6" height="5.6" rx="2.8" transform="translate(27.3,24.8) rotate(-42)"/></g></svg>
<svg style="left:0px;top:44px" width="90" height="38" viewBox="0 0 90 38"><polygon points="3,11 44,11 44,4 85,18.5 44,33 44,26 3,26" fill="#ed1c24"/></svg>
<span id="t0" style="left:783.22px;top:21.23px;font-size:14.5px;color:#fff;letter-spacing:0.083px;">Резисторы.xls - Excel</span>
<span id="t1" style="left:91.52px;top:55.83px;font-size:14.5px;color:#fff;transform:scaleX(1.025);transform-origin:0 0;">Файл</span>
<span id="t2" style="left:163.72px;top:55.83px;font-size:14.5px;color:#217346;letter-spacing:0.194px;">Главная</span>
<span id="t3" style="left:248.92px;top:55.83px;font-size:14.5px;color:#fff;letter-spacing:-0.057px;">Вставка</span>
<span id="t4" style="left:330.42px;top:55.83px;font-size:14.5px;color:#fff;letter-spacing:0.301px;">Разметка страницы</span>
<span id="t5" style="left:494.12px;top:55.83px;font-size:14.5px;color:#fff;letter-spacing:0.743px;">Формулы</span>
<span id="t6" style="left:589.32px;top:55.83px;font-size:14.5px;color:#fff;letter-spacing:0.754px;">Данные</span>
<span id="t7" style="left:673.42px;top:55.83px;font-size:14.5px;color:#fff;letter-spacing:0.538px;">Рецензирование</span>
<span id="t8" style="left:820.62px;top:55.83px;font-size:14.5px;color:#fff;transform:scaleX(1.031);transform-origin:0 0;">Вид</span>
<span id="t9" style="left:875.22px;top:55.83px;font-size:14.5px;color:#fff;letter-spacing:0.764px;">Acrobat</span>
<span id="t10" style="left:978.72px;top:55.83px;font-size:14.5px;color:#d9e8df;letter-spacing:0.074px;">Что вы хотите сделать?</span>
<span id="t11" style="left:1477.22px;top:56.33px;font-size:14.5px;color:#fff;letter-spacing:0.312px;">Общий доступ</span>
<span id="t12" style="left:77.62px;top:172.83px;font-size:12.6px;color:#666;letter-spacing:0.189px;">Буфер обмена</span>
<span id="t13" style="left:274.93px;top:172.83px;font-size:12.6px;color:#666;letter-spacing:0.429px;">Шрифт</span>
<span id="t14" style="left:465.32px;top:172.83px;font-size:12.6px;color:#666;letter-spacing:0.115px;">Выравнивание</span>
<span id="t15" style="left:667.23px;top:172.83px;font-size:12.6px;color:#666;letter-spacing:0.208px;">Число</span>
<span id="t16" style="left:916.23px;top:172.83px;font-size:12.6px;color:#666;letter-spacing:-0.533px;">Стили</span>
<span id="t17" style="left:1128.62px;top:172.83px;font-size:12.6px;color:#666;letter-spacing:0.102px;">Ячейки</span>
<span id="t18" style="left:1268.62px;top:172.83px;font-size:12.6px;color:#666;letter-spacing:0.140px;">Редактирование</span>
<span id="t19" style="left:1429.62px;top:172.83px;font-size:12.6px;color:#666;letter-spacing:0.553px;">Adobe Acrobat</span>
<span id="t20" style="left:79.93px;top:128.81px;font-size:14.4px;color:#444;letter-spacing:0.021px;">Вставить</span>
<span id="t21" style="left:814.23px;top:128.81px;font-size:14.4px;color:#444;letter-spacing:0.673px;">Условное</span>
<span id="t22" style="left:781.83px;top:148.81px;font-size:14.4px;color:#444;letter-spacing:0.570px;">форматирование</span>
<span id="t23" style="left:918.53px;top:128.81px;font-size:14.4px;color:#444;letter-spacing:0.593px;">Форматировать</span>
<span id="t24" style="left:928.53px;top:148.81px;font-size:14.4px;color:#444;letter-spacing:0.413px;">как таблицу</span>
<span id="t25" style="left:1038.53px;top:128.81px;font-size:14.4px;color:#444;letter-spacing:0.021px;">Стили</span>
<span id="t26" style="left:1034.63px;top:148.81px;font-size:14.4px;color:#444;letter-spacing:0.788px;">ячеек</span>
<span id="t27" style="left:1122.43px;top:86.41px;font-size:14.4px;color:#444;letter-spacing:-0.051px;">Вставить</span>
<span id="t28" style="left:1122.03px;top:113.51px;font-size:14.4px;color:#444;letter-spacing:0.184px;">Удалить</span>
<span id="t29" style="left:1122.43px;top:140.21px;font-size:14.4px;color:#444;letter-spacing:0.625px;">Формат</span>
<span id="t30" style="left:1254.63px;top:128.81px;font-size:14.4px;color:#444;letter-spacing:0.507px;">Сортировка</span>
<span id="t31" style="left:1259.93px;top:148.81px;font-size:14.4px;color:#444;letter-spacing:0.309px;">и фильтр</span>
<span id="t32" style="left:1352.83px;top:128.81px;font-size:14.4px;color:#444;letter-spacing:0.574px;">Найти и</span>
<span id="t33" style="left:1342.83px;top:148.81px;font-size:14.4px;color:#444;letter-spacing:0.301px;">выделить</span>
<span id="t34" style="left:1445.63px;top:128.81px;font-size:14.4px;color:#444;letter-spacing:0.126px;">Создать</span>
<span id="t35" style="left:1460.93px;top:148.81px;font-size:14.4px;color:#444;transform:scaleX(0.933);transform-origin:0 0;">PDF</span>
<span id="t36" style="left:195.49px;top:97.13px;font-size:15.2px;color:#444;letter-spacing:0.115px;">Calibri</span>
<span id="t37" style="left:310.19px;top:97.13px;font-size:15.2px;color:#444;transform:scaleX(0.966);transform-origin:0 0;">11</span>
<span id="t38" style="left:621.29px;top:97.13px;font-size:15.2px;color:#444;letter-spacing:0.238px;">Общий</span>
<span id="t39" style="left:196.47px;top:132.36px;font-size:17.3px;color:#444;font-weight:700;">Ж</span>
<span id="t40" style="left:224.27px;top:132.36px;font-size:17.3px;color:#444;font-weight:700;font-style:italic;transform:scaleX(0.93);transform-origin:0 0;">К</span>
<span id="t41" style="left:251.37px;top:132.36px;font-size:17.3px;color:#444;font-weight:700;transform:scaleX(0.95);transform-origin:0 0;">Ч</span>
<span id="t42" style="left:662.28px;top:132.02px;font-size:19px;color:#444;transform:scaleX(1.026);transform-origin:0 0;">%</span>
<span id="t43" style="left:687.28px;top:135.57px;font-size:11.5px;color:#444;transform:scaleX(0.976);transform-origin:0 0;">000</span>
<span id="t44" style="left:86.27px;top:208.28px;font-size:15.5px;color:#333;transform:scaleX(1.037);transform-origin:0 0;">A1</span>
<span id="t45" style="left:397.77px;top:208.08px;font-size:15.5px;color:#444;letter-spacing:0.600px;">Part Number</span>
<span id="t46" style="left:347.43px;top:204.07px;font-size:20px;color:#707070;font-weight:700;font-style:italic;letter-spacing:-0.800px;font-family:'Liberation Serif',serif;">fx</span>
<span id="t47" style="left:178.14px;top:247.96px;font-size:16px;color:#217346;width:10px;text-align:center;">A</span>
<span id="t48" style="left:347.64px;top:247.96px;font-size:16px;color:#2b2b2b;width:10px;text-align:center;">B</span>
<span id="t49" style="left:516.64px;top:247.96px;font-size:16px;color:#2b2b2b;width:10px;text-align:center;">C</span>
<span id="t50" style="left:673.64px;top:247.96px;font-size:16px;color:#2b2b2b;width:10px;text-align:center;">D</span>
<span id="t51" style="left:833.14px;top:247.96px;font-size:16px;color:#2b2b2b;width:10px;text-align:center;">E</span>
<span id="t52" style="left:964.14px;top:247.96px;font-size:16px;color:#2b2b2b;width:10px;text-align:center;">F</span>
<span id="t53" style="left:1083.64px;top:247.96px;font-size:16px;color:#2b2b2b;width:10px;text-align:center;">G</span>
<span id="t54" style="left:1189.64px;top:247.96px;font-size:16px;color:#2b2b2b;width:10px;text-align:center;">H</span>
<span id="t55" style="left:1269.64px;top:247.96px;font-size:16px;color:#2b2b2b;width:10px;text-align:center;">I</span>
<span id="t56" style="left:1349.64px;top:247.96px;font-size:16px;color:#2b2b2b;width:10px;text-align:center;">J</span>
<span id="t57" style="left:1429.64px;top:247.96px;font-size:16px;color:#2b2b2b;width:10px;text-align:center;">K</span>
<span id="t58" style="left:1509.64px;top:247.96px;font-size:16px;color:#2b2b2b;width:10px;text-align:center;">L</span>
<span id="t59" style="left:111.85px;top:272.03px;font-size:15.8px;color:#000;font-weight:700;letter-spacing:0.299px;">Part Number</span>
<span id="t60" style="left:262.65px;top:272.03px;font-size:15.8px;color:#000;font-weight:700;letter-spacing:-0.070px;">Library Ref</span>
<span id="t61" style="left:450.55px;top:272.03px;font-size:15.8px;color:#000;font-weight:700;letter-spacing:0.070px;">Footprint Ref</span>
<span id="t62" style="left:600.75px;top:272.03px;font-size:15.8px;color:#000;font-weight:700;letter-spacing:-0.098px;">Library Path</span>
<span id="t63" style="left:764.55px;top:272.03px;font-size:15.8px;color:#000;font-weight:700;letter-spacing:0.128px;">Footprint Path</span>
<span id="t64" style="left:919.15px;top:272.03px;font-size:15.8px;color:#000;font-weight:700;letter-spacing:0.780px;">Value</span>
<span id="t65" style="left:1026.55px;top:272.03px;font-size:15.8px;color:#000;font-weight:700;letter-spacing:0.276px;">Nominal Value</span>
<span id="t66" style="left:1158.65px;top:272.03px;font-size:15.8px;color:#000;font-weight:700;letter-spacing:0.175px;">Units</span>
<span id="t67" style="left:76.14px;top:271.86px;font-size:16px;color:#217346;width:30px;text-align:center;">1</span>
<span id="t68" style="left:76.14px;top:295.86px;font-size:16px;color:#2b2b2b;width:30px;text-align:center;">2</span>
<span id="t69" style="left:111.85px;top:296.03px;font-size:15.8px;color:#000;letter-spacing:-0.042px;width:146.5px;overflow:hidden;">Res Resistor3 1 Ом</span>
<span id="t70" style="left:262.65px;top:296.03px;font-size:15.8px;color:#000;transform:scaleX(0.915);transform-origin:0 0;">Res</span>
<span id="t71" style="left:450.55px;top:296.03px;font-size:15.8px;color:#000;letter-spacing:0.284px;">Resistor3</span>
<span id="t72" style="left:600.75px;top:296.03px;font-size:15.8px;color:#000;letter-spacing:0.134px;">BD.schlib</span>
<span id="t73" style="left:764.55px;top:296.03px;font-size:15.8px;color:#000;letter-spacing:0.323px;">BD.pcblib</span>
<span id="t74" style="left:916.16px;top:295.29px;font-size:15.6px;color:#000;letter-spacing:0.162px;width:106px;text-align:center;">1 Ом</span>
<span id="t75" style="left:1026.55px;top:296.03px;font-size:15.8px;color:#000;letter-spacing:0.350px;">1</span>
<span id="t76" style="left:1158.65px;top:296.03px;font-size:15.8px;color:#000;transform:scaleX(1.067);transform-origin:0 0;">Ом</span>
<span id="t77" style="left:76.14px;top:319.86px;font-size:16px;color:#2b2b2b;width:30px;text-align:center;">3</span>
<span id="t78" style="left:111.85px;top:320.03px;font-size:15.8px;color:#000;letter-spacing:-0.042px;width:146.5px;overflow:hidden;">Res Resistor3 1.1 Ом</span>
<span id="t79" style="left:262.65px;top:320.03px;font-size:15.8px;color:#000;transform:scaleX(0.915);transform-origin:0 0;">Res</span>
<span id="t80" style="left:450.55px;top:320.03px;font-size:15.8px;color:#000;letter-spacing:0.284px;">Resistor3</span>
<span id="t81" style="left:600.75px;top:320.03px;font-size:15.8px;color:#000;letter-spacing:0.134px;">BD.schlib</span>
<span id="t82" style="left:764.55px;top:320.03px;font-size:15.8px;color:#000;letter-spacing:0.323px;">BD.pcblib</span>
<span id="t83" style="left:916.16px;top:319.29px;font-size:15.6px;color:#000;letter-spacing:0.162px;width:106px;text-align:center;">1.1 Ом</span>
<span id="t84" style="left:1026.55px;top:320.03px;font-size:15.8px;color:#000;letter-spacing:0.350px;">1.1</span>
<span id="t85" style="left:1158.65px;top:320.03px;font-size:15.8px;color:#000;transform:scaleX(1.067);transform-origin:0 0;">Ом</span>
<span id="t86" style="left:76.14px;top:343.86px;font-size:16px;color:#2b2b2b;width:30px;text-align:center;">4</span>
<span id="t87" style="left:111.85px;top:344.03px;font-size:15.8px;color:#000;letter-spacing:-0.042px;width:146.5px;overflow:hidden;">Res Resistor3 1.2 Ом</span>
<span id="t88" style="left:262.65px;top:344.03px;font-size:15.8px;color:#000;transform:scaleX(0.915);transform-origin:0 0;">Res</span>
<span id="t89" style="left:450.55px;top:344.03px;font-size:15.8px;color:#000;letter-spacing:0.284px;">Resistor3</span>
<span id="t90" style="left:600.75px;top:344.03px;font-size:15.8px;color:#000;letter-spacing:0.134px;">BD.schlib</span>
<span id="t91" style="left:764.55px;top:344.03px;font-size:15.8px;color:#000;letter-spacing:0.323px;">BD.pcblib</span>
<span id="t92" style="left:916.16px;top:343.29px;font-size:15.6px;color:#000;letter-spacing:0.162px;width:106px;text-align:center;">1.2 Ом</span>
<span id="t93" style="left:1026.55px;top:344.03px;font-size:15.8px;color:#000;letter-spacing:0.350px;">1.2</span>
<span id="t94" style="left:1158.65px;top:344.03px;font-size:15.8px;color:#000;transform:scaleX(1.067);transform-origin:0 0;">Ом</span>
<span id="t95" style="left:76.14px;top:367.86px;font-size:16px;color:#2b2b2b;width:30px;text-align:center;">5</span>
<span id="t96" style="left:111.85px;top:368.03px;font-size:15.8px;color:#000;letter-spacing:-0.042px;width:146.5px;overflow:hidden;">Res Resistor3 1.3 Ом</span>
<span id="t97" style="left:262.65px;top:368.03px;font-size:15.8px;color:#000;transform:scaleX(0.915);transform-origin:0 0;">Res</span>
<span id="t98" style="left:450.55px;top:368.03px;font-size:15.8px;color:#000;letter-spacing:0.284px;">Resistor3</span>
<span id="t99" style="left:600.75px;top:368.03px;font-size:15.8px;color:#000;letter-spacing:0.134px;">BD.schlib</span>
<span id="t100" style="left:764.55px;top:368.03px;font-size:15.8px;color:#000;letter-spacing:0.323px;">BD.pcblib</span>
<span id="t101" style="left:916.16px;top:367.29px;font-size:15.6px;color:#000;letter-spacing:0.162px;width:106px;text-align:center;">1.3 Ом</span>
<span id="t102" style="left:1026.55px;top:368.03px;font-size:15.8px;color:#000;letter-spacing:0.350px;">1.3</span>
<span id="t103" style="left:1158.65px;top:368.03px;font-size:15.8px;color:#000;transform:scaleX(1.067);transform-origin:0 0;">Ом</span>
<span id="t104" style="left:76.14px;top:391.86px;font-size:16px;color:#2b2b2b;width:30px;text-align:center;">6</span>
<span id="t105" style="left:111.85px;top:392.03px;font-size:15.8px;color:#000;letter-spacing:-0.042px;width:146.5px;overflow:hidden;">Res Resistor3 1.5 Ом</span>
<span id="t106" style="left:262.65px;top:392.03px;font-size:15.8px;color:#000;transform:scaleX(0.915);transform-origin:0 0;">Res</span>
<span id="t107" style="left:450.55px;top:392.03px;font-size:15.8px;color:#000;letter-spacing:0.284px;">Resistor3</span>
<span id="t108" style="left:600.75px;top:392.03px;font-size:15.8px;color:#000;letter-spacing:0.134px;">BD.schlib</span>
<span id="t109" style="left:764.55px;top:392.03px;font-size:15.8px;color:#000;letter-spacing:0.323px;">BD.pcblib</span>
<span id="t110" style="left:916.16px;top:391.29px;font-size:15.6px;color:#000;letter-spacing:0.162px;width:106px;text-align:center;">1.5 Ом</span>
<span id="t111" style="left:1026.55px;top:392.03px;font-size:15.8px;color:#000;letter-spacing:0.350px;">1.5</span>
<span id="t112" style="left:1158.65px;top:392.03px;font-size:15.8px;color:#000;transform:scaleX(1.067);transform-origin:0 0;">Ом</span>
<span id="t113" style="left:76.14px;top:415.86px;font-size:16px;color:#2b2b2b;width:30px;text-align:center;">7</span>
<span id="t114" style="left:111.85px;top:416.03px;font-size:15.8px;color:#000;letter-spacing:-0.042px;width:146.5px;overflow:hidden;">Res Resistor3 1.6 Ом</span>
<span id="t115" style="left:262.65px;top:416.03px;font-size:15.8px;color:#000;transform:scaleX(0.915);transform-origin:0 0;">Res</span>
<span id="t116" style="left:450.55px;top:416.03px;font-size:15.8px;color:#000;letter-spacing:0.284px;">Resistor3</span>
<span id="t117" style="left:600.75px;top:416.03px;font-size:15.8px;color:#000;letter-spacing:0.134px;">BD.schlib</span>
<span id="t118" style="left:764.55px;top:416.03px;font-size:15.8px;color:#000;letter-spacing:0.323px;">BD.pcblib</span>
<span id="t119" style="left:916.16px;top:415.29px;font-size:15.6px;color:#000;letter-spacing:0.162px;width:106px;text-align:center;">1.6 Ом</span>
<span id="t120" style="left:1026.55px;top:416.03px;font-size:15.8px;color:#000;letter-spacing:0.350px;">1.6</span>
<span id="t121" style="left:1158.65px;top:416.03px;font-size:15.8px;color:#000;transform:scaleX(1.067);transform-origin:0 0;">Ом</span>
<span id="t122" style="left:76.14px;top:439.86px;font-size:16px;color:#2b2b2b;width:30px;text-align:center;">8</span>
<span id="t123" style="left:111.85px;top:440.03px;font-size:15.8px;color:#000;letter-spacing:-0.042px;width:146.5px;overflow:hidden;">Res Resistor3 1.8 Ом</span>
<span id="t124" style="left:262.65px;top:440.03px;font-size:15.8px;color:#000;transform:scaleX(0.915);transform-origin:0 0;">Res</span>
<span id="t125" style="left:450.55px;top:440.03px;font-size:15.8px;color:#000;letter-spacing:0.284px;">Resistor3</span>
<span id="t126" style="left:600.75px;top:440.03px;font-size:15.8px;color:#000;letter-spacing:0.134px;">BD.schlib</span>
<span id="t127" style="left:764.55px;top:440.03px;font-size:15.8px;color:#000;letter-spacing:0.323px;">BD.pcblib</span>
<span id="t128" style="left:916.16px;top:439.29px;font-size:15.6px;color:#000;letter-spacing:0.162px;width:106px;text-align:center;">1.8 Ом</span>
<span id="t129" style="left:1026.55px;top:440.03px;font-size:15.8px;color:#000;letter-spacing:0.350px;">1.8</span>
<span id="t130" style="left:1158.65px;top:440.03px;font-size:15.8px;color:#000;transform:scaleX(1.067);transform-origin:0 0;">Ом</span>
<span id="t131" style="left:76.14px;top:463.86px;font-size:16px;color:#2b2b2b;width:30px;text-align:center;">9</span>
<span id="t132" style="left:111.85px;top:464.03px;font-size:15.8px;color:#000;letter-spacing:-0.042px;width:146.5px;overflow:hidden;">Res Resistor3 2 Ом</span>
<span id="t133" style="left:262.65px;top:464.03px;font-size:15.8px;color:#000;transform:scaleX(0.915);transform-origin:0 0;">Res</span>
<span id="t134" style="left:450.55px;top:464.03px;font-size:15.8px;color:#000;letter-spacing:0.284px;">Resistor3</span>
<span id="t135" style="left:600.75px;top:464.03px;font-size:15.8px;color:#000;letter-spacing:0.134px;">BD.schlib</span>
<span id="t136" style="left:764.55px;top:464.03px;font-size:15.8px;color:#000;letter-spacing:0.323px;">BD.pcblib</span>
<span id="t137" style="left:916.16px;top:463.29px;font-size:15.6px;color:#000;letter-spacing:0.162px;width:106px;text-align:center;">2 Ом</span>
<span id="t138" style="left:1026.55px;top:464.03px;font-size:15.8px;color:#000;letter-spacing:0.350px;">2</span>
<span id="t139" style="left:1158.65px;top:464.03px;font-size:15.8px;color:#000;transform:scaleX(1.067);transform-origin:0 0;">Ом</span>
<span id="t140" style="left:76.14px;top:487.86px;font-size:16px;color:#2b2b2b;width:30px;text-align:center;">10</span>
<span id="t141" style="left:111.85px;top:488.03px;font-size:15.8px;color:#000;letter-spacing:-0.042px;width:146.5px;overflow:hidden;">Res Resistor3 2.2 Ом</span>
<span id="t142" style="left:262.65px;top:488.03px;font-size:15.8px;color:#000;transform:scaleX(0.915);transform-origin:0 0;">Res</span>
<span id="t143" style="left:450.55px;top:488.03px;font-size:15.8px;color:#000;letter-spacing:0.284px;">Resistor3</span>
<span id="t144" style="left:600.75px;top:488.03px;font-size:15.8px;color:#000;letter-spacing:0.134px;">BD.schlib</span>
<span id="t145" style="left:764.55px;top:488.03px;font-size:15.8px;color:#000;letter-spacing:0.323px;">BD.pcblib</span>
<span id="t146" style="left:916.16px;top:487.29px;font-size:15.6px;color:#000;letter-spacing:0.162px;width:106px;text-align:center;">2.2 Ом</span>
<span id="t147" style="left:1026.55px;top:488.03px;font-size:15.8px;color:#000;letter-spacing:0.350px;">2.2</span>
<span id="t148" style="left:1158.65px;top:488.03px;font-size:15.8px;color:#000;transform:scaleX(1.067);transform-origin:0 0;">Ом</span>
<span id="t149" style="left:76.14px;top:511.86px;font-size:16px;color:#2b2b2b;width:30px;text-align:center;">11</span>
<span id="t150" style="left:111.85px;top:512.03px;font-size:15.8px;color:#000;letter-spacing:-0.042px;width:146.5px;overflow:hidden;">Res Resistor3 2.4 Ом</span>
<span id="t151" style="left:262.65px;top:512.03px;font-size:15.8px;color:#000;transform:scaleX(0.915);transform-origin:0 0;">Res</span>
<span id="t152" style="left:450.55px;top:512.03px;font-size:15.8px;color:#000;letter-spacing:0.284px;">Resistor3</span>
<span id="t153" style="left:600.75px;top:512.03px;font-size:15.8px;color:#000;letter-spacing:0.134px;">BD.schlib</span>
<span id="t154" style="left:764.55px;top:512.03px;font-size:15.8px;color:#000;letter-spacing:0.323px;">BD.pcblib</span>
<span id="t155" style="left:916.16px;top:511.29px;font-size:15.6px;color:#000;letter-spacing:0.162px;width:106px;text-align:center;">2.4 Ом</span>
<span id="t156" style="left:1026.55px;top:512.03px;font-size:15.8px;color:#000;letter-spacing:0.350px;">2.4</span>
<span id="t157" style="left:1158.65px;top:512.03px;font-size:15.8px;color:#000;transform:scaleX(1.067);transform-origin:0 0;">Ом</span>
<span id="t158" style="left:76.14px;top:535.86px;font-size:16px;color:#2b2b2b;width:30px;text-align:center;">12</span>
<span id="t159" style="left:111.85px;top:536.03px;font-size:15.8px;color:#000;letter-spacing:-0.042px;width:146.5px;overflow:hidden;">Res Resistor3 2.7 Ом</span>
<span id="t160" style="left:262.65px;top:536.03px;font-size:15.8px;color:#000;transform:scaleX(0.915);transform-origin:0 0;">Res</span>
<span id="t161" style="left:450.55px;top:536.03px;font-size:15.8px;color:#000;letter-spacing:0.284px;">Resistor3</span>
<span id="t162" style="left:600.75px;top:536.03px;font-size:15.8px;color:#000;letter-spacing:0.134px;">BD.schlib</span>
<span id="t163" style="left:764.55px;top:536.03px;font-size:15.8px;color:#000;letter-spacing:0.323px;">BD.pcblib</span>
<span id="t164" style="left:916.16px;top:535.29px;font-size:15.6px;color:#000;letter-spacing:0.162px;width:106px;text-align:center;">2.7 Ом</span>
<span id="t165" style="left:1026.55px;top:536.03px;font-size:15.8px;color:#000;letter-spacing:0.350px;">2.7</span>
<span id="t166" style="left:1158.65px;top:536.03px;font-size:15.8px;color:#000;transform:scaleX(1.067);transform-origin:0 0;">Ом</span>
<span id="t167" style="left:76.14px;top:559.86px;font-size:16px;color:#2b2b2b;width:30px;text-align:center;">13</span>
<span id="t168" style="left:111.85px;top:560.03px;font-size:15.8px;color:#000;letter-spacing:-0.042px;width:146.5px;overflow:hidden;">Res Resistor3 3 Ом</span>
<span id="t169" style="left:262.65px;top:560.03px;font-size:15.8px;color:#000;transform:scaleX(0.915);transform-origin:0 0;">Res</span>
<span id="t170" style="left:450.55px;top:560.03px;font-size:15.8px;color:#000;letter-spacing:0.284px;">Resistor3</span>
<span id="t171" style="left:600.75px;top:560.03px;font-size:15.8px;color:#000;letter-spacing:0.134px;">BD.schlib</span>
<span id="t172" style="left:764.55px;top:560.03px;font-size:15.8px;color:#000;letter-spacing:0.323px;">BD.pcblib</span>
<span id="t173" style="left:916.16px;top:559.29px;font-size:15.6px;color:#000;letter-spacing:0.162px;width:106px;text-align:center;">3 Ом</span>
<span id="t174" style="left:1026.55px;top:560.03px;font-size:15.8px;color:#000;letter-spacing:0.350px;">3</span>
<span id="t175" style="left:1158.65px;top:560.03px;font-size:15.8px;color:#000;transform:scaleX(1.067);transform-origin:0 0;">Ом</span>
<span id="t176" style="left:76.14px;top:583.86px;font-size:16px;color:#2b2b2b;width:30px;text-align:center;">14</span>
<span id="t177" style="left:111.85px;top:584.03px;font-size:15.8px;color:#000;letter-spacing:-0.042px;width:146.5px;overflow:hidden;">Res Resistor3 3.3 Ом</span>
<span id="t178" style="left:262.65px;top:584.03px;font-size:15.8px;color:#000;transform:scaleX(0.915);transform-origin:0 0;">Res</span>
<span id="t179" style="left:450.55px;top:584.03px;font-size:15.8px;color:#000;letter-spacing:0.284px;">Resistor3</span>
<span id="t180" style="left:600.75px;top:584.03px;font-size:15.8px;color:#000;letter-spacing:0.134px;">BD.schlib</span>
<span id="t181" style="left:764.55px;top:584.03px;font-size:15.8px;color:#000;letter-spacing:0.323px;">BD.pcblib</span>
<span id="t182" style="left:916.16px;top:583.29px;font-size:15.6px;color:#000;letter-spacing:0.162px;width:106px;text-align:center;">3.3 Ом</span>
<span id="t183" style="left:1026.55px;top:584.03px;font-size:15.8px;color:#000;letter-spacing:0.350px;">3.3</span>
<span id="t184" style="left:1158.65px;top:584.03px;font-size:15.8px;color:#000;transform:scaleX(1.067);transform-origin:0 0;">Ом</span>
<span id="t185" style="left:76.14px;top:607.86px;font-size:16px;color:#2b2b2b;width:30px;text-align:center;">15</span>
<span id="t186" style="left:111.85px;top:608.03px;font-size:15.8px;color:#000;letter-spacing:-0.042px;width:146.5px;overflow:hidden;">Res Resistor3 3.6 Ом</span>
<span id="t187" style="left:262.65px;top:608.03px;font-size:15.8px;color:#000;transform:scaleX(0.915);transform-origin:0 0;">Res</span>
<span id="t188" style="left:450.55px;top:608.03px;font-size:15.8px;color:#000;letter-spacing:0.284px;">Resistor3</span>
<span id="t189" style="left:600.75px;top:608.03px;font-size:15.8px;color:#000;letter-spacing:0.134px;">BD.schlib</span>
<span id="t190" style="left:764.55px;top:608.03px;font-size:15.8px;color:#000;letter-spacing:0.323px;">BD.pcblib</span>
<span id="t191" style="left:916.16px;top:607.29px;font-size:15.6px;color:#000;letter-spacing:0.162px;width:106px;text-align:center;">3.6 Ом</span>
<span id="t192" style="left:1026.55px;top:608.03px;font-size:15.8px;color:#000;letter-spacing:0.350px;">3.6</span>
<span id="t193" style="left:1158.65px;top:608.03px;font-size:15.8px;color:#000;transform:scaleX(1.067);transform-origin:0 0;">Ом</span>
<span id="t194" style="left:76.14px;top:631.86px;font-size:16px;color:#2b2b2b;width:30px;text-align:center;">16</span>
<span id="t195" style="left:111.85px;top:632.03px;font-size:15.8px;color:#000;letter-spacing:-0.042px;width:146.5px;overflow:hidden;">Res Resistor3 3.9 Ом</span>
<span id="t196" style="left:262.65px;top:632.03px;font-size:15.8px;color:#000;transform:scaleX(0.915);transform-origin:0 0;">Res</span>
<span id="t197" style="left:450.55px;top:632.03px;font-size:15.8px;color:#000;letter-spacing:0.284px;">Resistor3</span>
<span id="t198" style="left:600.75px;top:632.03px;font-size:15.8px;color:#000;letter-spacing:0.134px;">BD.schlib</span>
<span id="t199" style="left:764.55px;top:632.03px;font-size:15.8px;color:#000;letter-spacing:0.323px;">BD.pcblib</span>
<span id="t200" style="left:916.16px;top:631.29px;font-size:15.6px;color:#000;letter-spacing:0.162px;width:106px;text-align:center;">3.9 Ом</span>
<span id="t201" style="left:1026.55px;top:632.03px;font-size:15.8px;color:#000;letter-spacing:0.350px;">3.9</span>
<span id="t202" style="left:1158.65px;top:632.03px;font-size:15.8px;color:#000;transform:scaleX(1.067);transform-origin:0 0;">Ом</span>
<span id="t203" style="left:76.14px;top:655.86px;font-size:16px;color:#2b2b2b;width:30px;text-align:center;">17</span>
<span id="t204" style="left:111.85px;top:656.03px;font-size:15.8px;color:#000;letter-spacing:-0.042px;width:146.5px;overflow:hidden;">Res Resistor3 4.3 Ом</span>
<span id="t205" style="left:262.65px;top:656.03px;font-size:15.8px;color:#000;transform:scaleX(0.915);transform-origin:0 0;">Res</span>
<span id="t206" style="left:450.55px;top:656.03px;font-size:15.8px;color:#000;letter-spacing:0.284px;">Resistor3</span>
<span id="t207" style="left:600.75px;top:656.03px;font-size:15.8px;color:#000;letter-spacing:0.134px;">BD.schlib</span>
<span id="t208" style="left:764.55px;top:656.03px;font-size:15.8px;color:#000;letter-spacing:0.323px;">BD.pcblib</span>
<span id="t209" style="left:916.16px;top:655.29px;font-size:15.6px;color:#000;letter-spacing:0.162px;width:106px;text-align:center;">4.3 Ом</span>
<span id="t210" style="left:1026.55px;top:656.03px;font-size:15.8px;color:#000;letter-spacing:0.350px;">4.3</span>
<span id="t211" style="left:1158.65px;top:656.03px;font-size:15.8px;color:#000;transform:scaleX(1.067);transform-origin:0 0;">Ом</span>
<span id="t212" style="left:76.14px;top:679.86px;font-size:16px;color:#2b2b2b;width:30px;text-align:center;">18</span>
<span id="t213" style="left:111.85px;top:680.03px;font-size:15.8px;color:#000;letter-spacing:-0.042px;width:146.5px;overflow:hidden;">Res Resistor3 4.7 Ом</span>
<span id="t214" style="left:262.65px;top:680.03px;font-size:15.8px;color:#000;transform:scaleX(0.915);transform-origin:0 0;">Res</span>
<span id="t215" style="left:450.55px;top:680.03px;font-size:15.8px;color:#000;letter-spacing:0.284px;">Resistor3</span>
<span id="t216" style="left:600.75px;top:680.03px;font-size:15.8px;color:#000;letter-spacing:0.134px;">BD.schlib</span>
<span id="t217" style="left:764.55px;top:680.03px;font-size:15.8px;color:#000;letter-spacing:0.323px;">BD.pcblib</span>
<span id="t218" style="left:916.16px;top:679.29px;font-size:15.6px;color:#000;letter-spacing:0.162px;width:106px;text-align:center;">4.7 Ом</span>
<span id="t219" style="left:1026.55px;top:680.03px;font-size:15.8px;color:#000;letter-spacing:0.350px;">4.7</span>
<span id="t220" style="left:1158.65px;top:680.03px;font-size:15.8px;color:#000;transform:scaleX(1.067);transform-origin:0 0;">Ом</span>
<span id="t221" style="left:76.14px;top:703.86px;font-size:16px;color:#2b2b2b;width:30px;text-align:center;">19</span>
<span id="t222" style="left:111.85px;top:704.03px;font-size:15.8px;color:#000;letter-spacing:-0.042px;width:146.5px;overflow:hidden;">Res Resistor3 5.1 Ом</span>
<span id="t223" style="left:262.65px;top:704.03px;font-size:15.8px;color:#000;transform:scaleX(0.915);transform-origin:0 0;">Res</span>
<span id="t224" style="left:450.55px;top:704.03px;font-size:15.8px;color:#000;letter-spacing:0.284px;">Resistor3</span>
<span id="t225" style="left:600.75px;top:704.03px;font-size:15.8px;color:#000;letter-spacing:0.134px;">BD.schlib</span>
<span id="t226" style="left:764.55px;top:704.03px;font-size:15.8px;color:#000;letter-spacing:0.323px;">BD.pcblib</span>
<span id="t227" style="left:916.16px;top:703.29px;font-size:15.6px;color:#000;letter-spacing:0.162px;width:106px;text-align:center;">5.1 Ом</span>
<span id="t228" style="left:1026.55px;top:704.03px;font-size:15.8px;color:#000;letter-spacing:0.350px;">5.1</span>
<span id="t229" style="left:1158.65px;top:704.03px;font-size:15.8px;color:#000;transform:scaleX(1.067);transform-origin:0 0;">Ом</span>
<span id="t230" style="left:76.14px;top:727.86px;font-size:16px;color:#2b2b2b;width:30px;text-align:center;">20</span>
<span id="t231" style="left:111.85px;top:728.03px;font-size:15.8px;color:#000;letter-spacing:-0.042px;width:146.5px;overflow:hidden;">Res Resistor3 5.6 Ом</span>
<span id="t232" style="left:262.65px;top:728.03px;font-size:15.8px;color:#000;transform:scaleX(0.915);transform-origin:0 0;">Res</span>
<span id="t233" style="left:450.55px;top:728.03px;font-size:15.8px;color:#000;letter-spacing:0.284px;">Resistor3</span>
<span id="t234" style="left:600.75px;top:728.03px;font-size:15.8px;color:#000;letter-spacing:0.134px;">BD.schlib</span>
<span id="t235" style="left:764.55px;top:728.03px;font-size:15.8px;color:#000;letter-spacing:0.323px;">BD.pcblib</span>
<span id="t236" style="left:916.16px;top:727.29px;font-size:15.6px;color:#000;letter-spacing:0.162px;width:106px;text-align:center;">5.6 Ом</span>
<span id="t237" style="left:1026.55px;top:728.03px;font-size:15.8px;color:#000;letter-spacing:0.350px;">5.6</span>
<span id="t238" style="left:1158.65px;top:728.03px;font-size:15.8px;color:#000;transform:scaleX(1.067);transform-origin:0 0;">Ом</span>
<span id="t239" style="left:188.93px;top:751.59px;font-size:16.2px;color:#217346;font-weight:700;letter-spacing:0.223px;">Лист1</span>
<span id="t240" style="left:80.41px;top:784.06px;font-size:12.8px;color:#5e5e5e;letter-spacing:0.631px;">Готово</span>
<span id="t241" style="left:1549.01px;top:784.16px;font-size:12.8px;color:#5e5e5e;transform:scaleX(0.965);transform-origin:0 0;">100%</span>
<span id="t242" style="left:374.20px;top:97.30px;font-size:15px;color:#484848;transform:scaleX(1.220);transform-origin:0 0;">A</span>
<span id="t243" style="left:399.42px;top:98.44px;font-size:14.6px;color:#484848;transform:scaleX(1.229);transform-origin:0 0;">A</span>
<span id="t244" style="left:385.67px;top:129.97px;font-size:17.4px;color:#4a4a4a;font-weight:700;transform:scaleX(0.96);transform-origin:0 0;">A</span>
<span id="t245" style="left:734.19px;top:131.86px;font-size:9.5px;color:#444;">0</span>
<span id="t246" style="left:726.49px;top:140.76px;font-size:9.5px;color:#444;letter-spacing:-0.4px;">,00</span>
<span id="t247" style="left:752.49px;top:131.86px;font-size:9.5px;color:#444;letter-spacing:-0.4px;">,00</span>
<span id="t248" style="left:757.69px;top:140.76px;font-size:9.5px;color:#444;letter-spacing:-0.4px;">,0</span>
<span id="t249" style="left:1278.71px;top:83.94px;font-size:18.5px;color:#4179bd;font-weight:700;transform:scaleX(1.114);transform-origin:0 0;">A</span>
<span id="t250" style="left:1278.61px;top:101.02px;font-size:18.4px;color:#9a58b5;font-weight:700;transform:scaleX(0.8);transform-origin:0 0;">Я</span>
</div></body></html>
